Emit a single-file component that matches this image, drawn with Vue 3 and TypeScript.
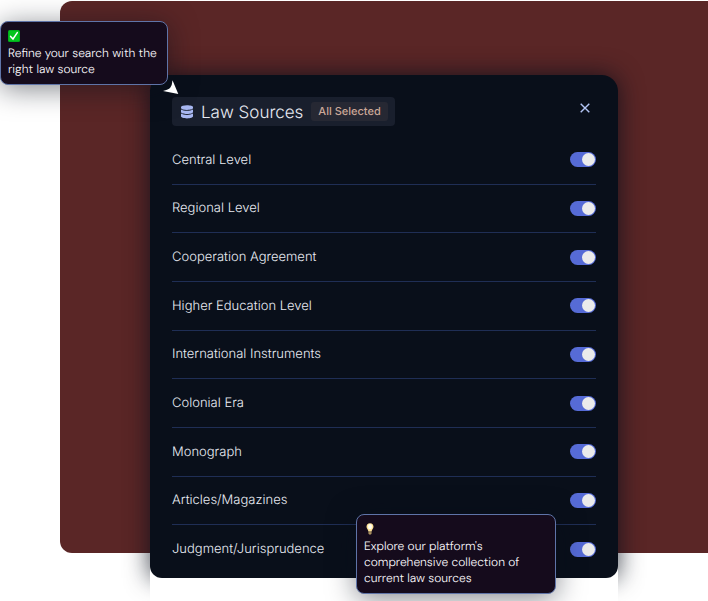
<script setup lang="ts">
import { ref, computed } from 'vue'

interface Source {
  id: string
  label: string
  enabled: boolean
}

const names: string[] = [
  'Central Level',
  'Regional Level',
  'Cooperation Agreement',
  'Higher Education Level',
  'International Instruments',
  'Colonial Era',
  'Monograph',
  'Articles/Magazines',
  'Judgment/Jurisprudence',
]

const sources = ref<Source[]>(
  names.map((label, i) => ({ id: `source-${i}`, label, enabled: true })),
)

const summary = computed(() => {
  const count = sources.value.filter((s) => s.enabled).length
  return count === sources.value.length ? 'All Selected' : `${count} Selected`
})
</script>

<template>
  <main class="page">
    <div class="backdrop"></div>

    <div class="stage">
      <section class="card">
        <header class="head">
          <div class="title">
            <svg class="db" viewBox="0 0 12 14" aria-hidden="true">
              <path d="M0 2.200C0 1 2.700 0.300 6 0.300S12 1 12 2.200V3C12 4.200 9.300 4.900 6 4.900S0 4.200 0 3Z" />
              <path d="M0 4.500C1.300 5.400 3.500 5.800 6 5.800S10.700 5.400 12 4.500V7C12 8.200 9.300 9 6 9S0 8.200 0 7Z" />
              <path d="M0 8.600C1.300 9.500 3.500 9.900 6 9.900S10.700 9.500 12 8.600V11.300C12 12.500 9.300 13.400 6 13.400S0 12.500 0 11.300Z" />
            </svg>
            <h1>Law Sources</h1>
            <span class="badge">{{ summary }}</span>
          </div>
          <button class="close" type="button" aria-label="Close">
            <svg viewBox="0 0 10 10" aria-hidden="true">
              <path d="M0.700 0.700L9.300 9.300M9.300 0.700L0.700 9.300" />
            </svg>
          </button>
        </header>

        <ul class="list">
          <li v-for="s in sources" :key="s.id" class="row">
            <label :for="s.id">{{ s.label }}</label>
            <input :id="s.id" v-model="s.enabled" class="toggle" type="checkbox" role="switch" />
          </li>
        </ul>
      </section>
    </div>

    <aside class="tip tip-search">
      <svg class="emoji" viewBox="0 0 12 12" aria-hidden="true">
        <rect width="12" height="12" rx="1.500" fill="#00a51b" />
        <rect x="0.700" y="0.700" width="10.600" height="10.600" rx="1" fill="#04c51d" />
        <path d="M2.600 6.400L5 9L9.300 2.600" fill="none" stroke="#fff" stroke-width="1.500" stroke-linecap="round" />
      </svg>
      <p>Refine your search with the right law source</p>
    </aside>

    <svg class="pointer" viewBox="0 0 16 15" aria-hidden="true">
      <path d="M9.500 0.300L15.300 14L0 11Q5.500 9.800 7.200 7.800Q9.200 5.200 9.500 0.300Z" />
    </svg>

    <aside class="tip tip-explore">
      <svg class="emoji" viewBox="0 0 12 12" aria-hidden="true">
        <path d="M6 0.300C3.700 0.300 2.500 1.900 2.500 3.800C2.500 5.800 4.200 6.500 4.400 8.500H7.600C7.800 6.500 9.500 5.800 9.500 3.800C9.500 1.900 8.300 0.300 6 0.300Z" fill="#ffe49a" />
        <ellipse cx="6" cy="3.700" rx="2" ry="2.600" fill="#fffef0" />
        <path d="M4.500 8.500H7.500V10.700Q6 12.500 4.500 10.700Z" fill="#b9a06a" />
        <path d="M4.600 9.800H7.400" stroke="#6b5a3c" stroke-width="0.600" />
      </svg>
      <p>Explore our platform's comprehensive collection of current law sources</p>
    </aside>
  </main>
</template>

<style>
body {
  margin: 0;
  background: #fff;
}
</style>

<style scoped>
.page {
  position: relative;
  display: grid;
  min-height: 601px;
  align-items: start;
  overflow: hidden;
  font-family: Inter, "Liberation Sans", sans-serif;
  text-rendering: geometricPrecision;
}

.backdrop,
.stage {
  grid-area: 1 / 1;
}

.backdrop {
  height: 552px;
  margin: 1px 0 0 60px;
  border-radius: 12px 0 0 12px;
  background: #5a2626;
}

.stage {
  position: relative;
  isolation: isolate;
  margin: 75px 90px 0 150px;
  border-radius: 16px 16px 0 0;
  box-shadow: 0 0 24px rgba(8, 14, 26, 0.8);
}

/* Keeps the shadow to the sides of the card's lower edge. */
.stage::after {
  content: "";
  position: absolute;
  z-index: -1;
  inset: auto 0 -30px;
  height: 55px;
  background: #fff;
}

.card {
  padding: 22px 22px 4px;
  border-radius: 16px 16px 12px 12px;
  background: #090f1a;
  color: #e8ebf3;
}

.head {
  display: flex;
  justify-content: space-between;
  align-items: flex-start;
}

.title {
  display: flex;
  align-items: center;
  gap: 8px;
  height: 29px;
  padding: 0 7px 0 9px;
  border-radius: 4px;
  background: #191f2d;
}

.db {
  width: 12px;
  height: 14px;
  fill: #a9b8f2;
}

h1 {
  margin: 0;
  padding-top: 2px;
  font-size: 17px;
  font-weight: 300;
  line-height: 22px;
}

.badge {
  padding: 0 7px;
  border-radius: 3px;
  background: #262833;
  color: #cba797;
  font-size: 11px;
  font-weight: 500;
  line-height: 19px;
}

.close {
  display: grid;
  place-items: center;
  width: 22px;
  height: 22px;
  padding: 0;
  border: 0;
  background: none;
}

.close svg {
  width: 10px;
  height: 10px;
  fill: none;
  stroke: #b3c5f5;
  stroke-width: 1.4;
}

.list {
  display: grid;
  grid-auto-rows: 1fr;
  height: 438px;
  margin: 10px 0 0;
  padding: 0;
  list-style: none;
}

.row {
  display: flex;
  align-items: center;
  justify-content: space-between;
  border-bottom: 1px solid #1f2e55;
  font-size: 13px;
  font-weight: 300;
  line-height: 20px;
}

.row:last-child {
  border-bottom-color: transparent;
}

.toggle {
  appearance: none;
  display: flex;
  width: 26px;
  height: 15px;
  margin: 0;
  border-radius: 8px;
  background: #39405a;
}

.toggle::before {
  content: "";
  width: 13px;
  height: 13px;
  margin: 1px;
  border-radius: 50%;
  background: #ebebeb;
}

.toggle:checked {
  justify-content: flex-end;
  background: #566bd6;
}

.tip {
  position: absolute;
  box-sizing: border-box;
  padding: 8px 7px 7px;
  border: 1px solid #5f74a8;
  border-radius: 8px;
  background: #150b1c;
  color: #f8f6fa;
  box-shadow: 0 4px 28px rgba(8, 14, 26, 0.5);
  font-family: "DM Sans", Inter, sans-serif;
  font-size: 12px;
  font-weight: 300;
  line-height: 16px;
}

.tip p {
  margin: 0;
}

.tip-search {
  top: 21px;
  left: 0;
  width: 168px;
}

.tip-explore {
  top: 514px;
  left: 356px;
  width: 200px;
}

.emoji {
  display: block;
  width: 12px;
  height: 12px;
  margin: 0 0 3px;
}

.pointer {
  position: absolute;
  top: 80px;
  left: 163px;
  width: 16px;
  height: 15px;
  fill: #fff;
}
</style>
